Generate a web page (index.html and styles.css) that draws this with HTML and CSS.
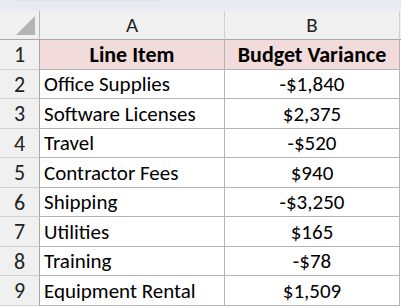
FILE: index.html
```html
<!DOCTYPE html>
<html>
<head>
<meta charset="utf-8">
<link rel="stylesheet" href="styles.css">
</head>
<body>
<div class="topband"><span class="fbar"></span></div>
<div class="sheet">
  <div class="corner"><span class="tri"></span></div>
  <div class="colhead">A</div>
  <div class="colhead">B</div>
  <div class="colhead edge"></div>

  <div class="rowhead r30">1</div>
  <div class="cell title r30">Line Item</div>
  <div class="cell title num r30">Budget Variance</div>
  <div class="edge r30"></div>

  <div class="rowhead r29">2</div>
  <div class="cell r29">Office Supplies</div>
  <div class="cell num r29">-$1,840</div>
  <div class="edge r29"></div>

  <div class="rowhead r30">3</div>
  <div class="cell r30">Software Licenses</div>
  <div class="cell num r30">$2,375</div>
  <div class="edge r30"></div>

  <div class="rowhead r29">4</div>
  <div class="cell r29">Travel</div>
  <div class="cell num r29">-$520</div>
  <div class="edge r29"></div>

  <div class="rowhead r30">5</div>
  <div class="cell r30">Contractor Fees</div>
  <div class="cell num r30">$940</div>
  <div class="edge r30"></div>

  <div class="rowhead r29">6</div>
  <div class="cell r29">Shipping</div>
  <div class="cell num r29">-$3,250</div>
  <div class="edge r29"></div>

  <div class="rowhead r30">7</div>
  <div class="cell r30">Utilities</div>
  <div class="cell num r30">$165</div>
  <div class="edge r30"></div>

  <div class="rowhead r29">8</div>
  <div class="cell r29">Training</div>
  <div class="cell num r29">-$78</div>
  <div class="edge r29"></div>

  <div class="rowhead r30">9</div>
  <div class="cell r30">Equipment Rental</div>
  <div class="cell num r30">$1,509</div>
  <div class="edge r30"></div>
</div>
</body>
</html>
```
FILE: styles.css
```css
html, body {
  margin: 0;
  padding: 0;
  background: #ffffff;
  overflow: hidden;
}
body {
  font-family: "Carlito", "Lato", "Liberation Sans", sans-serif;
  font-size: 21px;
  color: #000;
}
.topband {
  height: 11px;
  background: #e8ecf0;
}
.fbar {
  display: block;
  margin-left: 17px;
  width: 143px;
  height: 1px;
  background: #dfe3e7;
}
.sheet {
  display: grid;
  grid-template-columns: 40px 185px 175px 1fr;
}
.corner, .colhead {
  height: 28px;
  background: #f0f0f0;
  border-bottom: 1px solid #a8a8a8;
  border-right: 1px solid #d0d0d0;
}
.colhead {
  display: flex;
  align-items: center;
  justify-content: center;
  font-size: 21px;
  color: #222;
}
.colhead.edge {
  border-right: none;
}
.corner {
  position: relative;
  border-right: 1px solid #b8b8b8;
}
.tri {
  position: absolute;
  left: 16px;
  top: 5px;
  width: 0;
  height: 0;
  border-style: solid;
  border-width: 0 0 19px 19px;
  border-color: transparent transparent #b4b4b4 transparent;
}
.rowhead {
  background: #f0f0f0;
  border-right: 1px solid #a8a8a8;
  border-bottom: 1px solid #d0d0d0;
  display: flex;
  align-items: center;
  justify-content: center;
  font-size: 22px;
  color: #222;
}
.cell {
  border-right: 1px solid #b4b4b4;
  border-bottom: 1px solid #b4b4b4;
  display: flex;
  align-items: center;
  padding-left: 4px;
  white-space: nowrap;
  overflow: hidden;
}
.cell.num {
  justify-content: center;
  padding-left: 0;
}
.cell.title {
  background: #f2dcdb;
  font-weight: bold;
  font-size: 22px;
  justify-content: center;
  padding-left: 0;
}
.edge {
  background: #ffffff;
}
.colhead.edge {
  background: #f0f0f0;
}
.r30 { height: 29px; }
.r29 { height: 28px; }
```
